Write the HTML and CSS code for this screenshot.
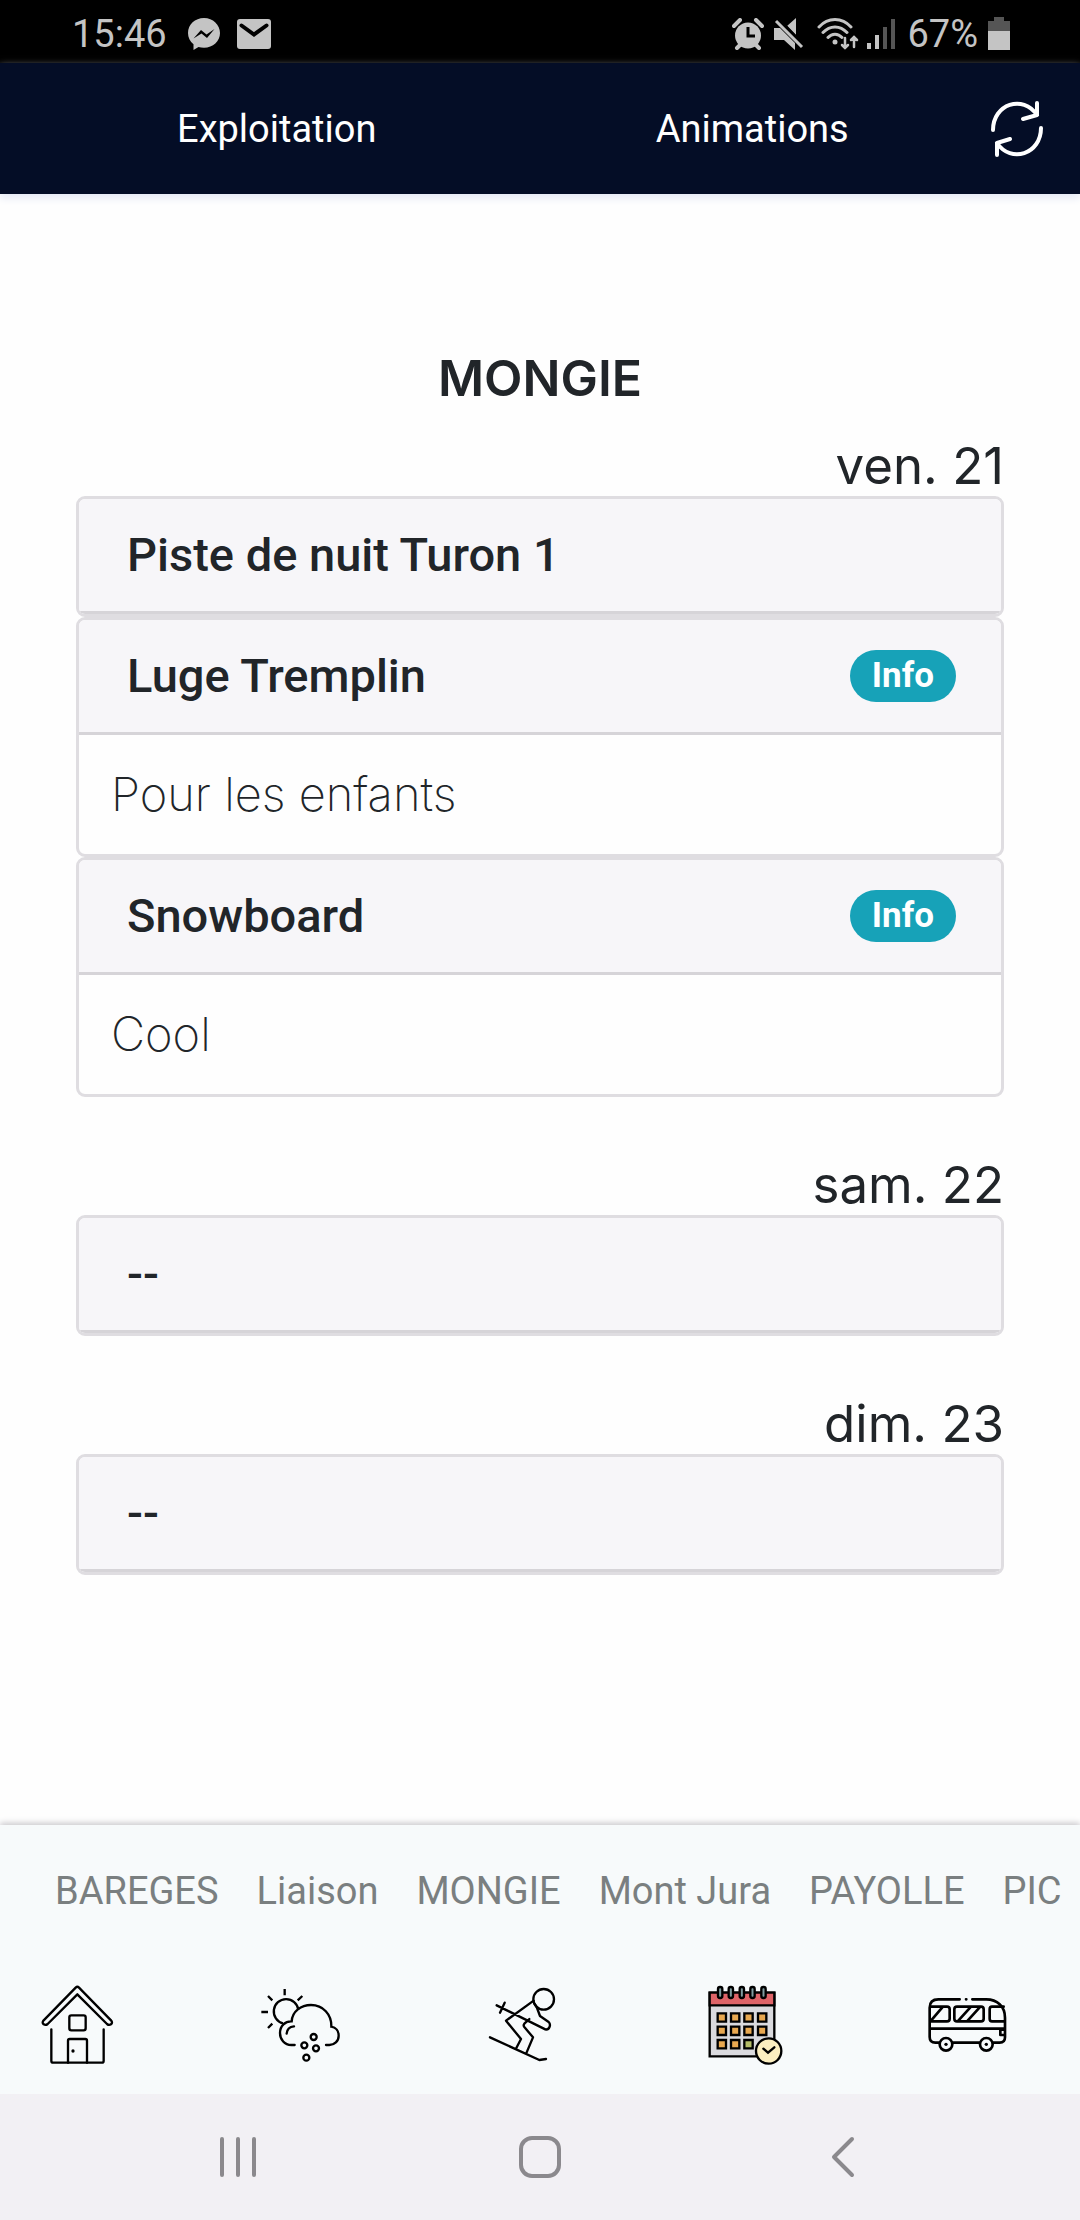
FILE: index.html
```html
<!DOCTYPE html>
<html lang="fr">
<head>
<meta charset="utf-8">
<meta name="viewport" content="width=device-width, initial-scale=1">
<title>Animations</title>
<link rel="stylesheet" href="styles.css">
</head>
<body>
<div class="status">
  <div class="status-group">
    <span class="clock">15:46</span>
    <svg class="messenger" width="32" height="32" viewBox="0 0 32 32"><path fill="#c4c4c4" d="M16 0C7 0 0 6.500 0 15c0 4.700 2 8.500 5.500 11.200V32l5-3c1.700.5 3.500.7 5.500.7 9 0 16-6.500 16-14.700S25 0 16 0z"/><path fill="#000" d="M5.500 20.500 13 12l5.500 4.500L26.500 11 19 20l-5.500-4.500z"/></svg>
    <svg width="34" height="30" viewBox="0 0 34 30"><rect width="34" height="30" rx="3" fill="#c4c4c4"/><path d="m4.500 6.500 12.500 9 12.500-9" fill="none" stroke="#000" stroke-width="4" stroke-linecap="round"/></svg>
  </div>
  <div class="status-group status-right">
    <svg width="32" height="32" viewBox="0 0 32 32"><g fill="none" stroke="#c4c4c4" stroke-width="4"><path d="m2 8 6-6M30 8l-6-6M5 30l4-4M27 30l-4-4" stroke-linecap="round"/></g><circle cx="16" cy="17.500" r="13" fill="#c4c4c4"/><path d="M16 9v9h7" fill="none" stroke="#000" stroke-width="3"/></svg>
    <svg width="30" height="32" viewBox="0 0 30 32"><path fill="#c4c4c4" d="M13 8l9-8v17zM0 10h6l15 15v7L10 22H0z"/><path d="m4 1 25 26" stroke="#000" stroke-width="4"/><path d="m2 3 26 26" stroke="#c4c4c4" stroke-width="3"/></svg>
    <svg class="wifi" width="42" height="34" viewBox="0 0 42 34"><g fill="none" stroke="#c4c4c4" stroke-width="3" stroke-linecap="round"><path d="M2 10c9-10 23-10 32 0M6 15.500c7-7.500 17-7.500 24 0M11 20.500c4-4.500 10-4.500 14 0"/><path stroke-width="2.500" d="M28 21v10m-3-3 3 3 3-3M37 30V20m-3 3 3-3 3 3"/></g><circle cx="18" cy="25" r="2.500" fill="#c4c4c4"/></svg>
    <svg class="signal" width="28" height="30" viewBox="0 0 28 30"><path fill="#c4c4c4" d="M0 24h4v6H0zM8 16h4v14H8z"/><path fill="#555" d="M16 8h4v22h-4zM24 0h4v30h-4z"/></svg>
    <span class="clock">67%</span>
    <svg width="22" height="33" viewBox="0 0 22 33"><path fill="#555" d="M6 0h10v4h6v10H0V4h6z"/><path fill="#c4c4c4" d="M0 14h22v19H0z"/></svg>
  </div>
</div>

<header class="topbar">
  <nav class="tabs">
    <a href="#exploitation">Exploitation</a>
    <a href="#animations">Animations</a>
  </nav>
  <button class="refresh" type="button" aria-label="Actualiser">
    <svg width="54" height="58" viewBox="0 0 54 58"><g fill="none" stroke="#fff" stroke-width="4" stroke-linecap="round" stroke-linejoin="round"><path d="M3 30C3 4 33-6 47 15M33 19l14-4V3M51 28c0 26-30 36-44 15M20 39 7 43v12"/></g></svg>
  </button>
</header>

<main class="content">
  <h1 class="resort">MONGIE</h1>

  <section class="day">
    <h2 class="date">ven. 21</h2>
    <article class="card">
      <h3 class="card-head">Piste de nuit Turon 1</h3>
    </article>
    <article class="card">
      <h3 class="card-head">Luge Tremplin <span class="badge">Info</span></h3>
      <p class="card-body">Pour les enfants</p>
    </article>
    <article class="card">
      <h3 class="card-head">Snowboard <span class="badge">Info</span></h3>
      <p class="card-body">Cool</p>
    </article>
  </section>

  <section class="day">
    <h2 class="date">sam. 22</h2>
    <article class="card">
      <h3 class="card-head">--</h3>
    </article>
  </section>

  <section class="day">
    <h2 class="date">dim. 23</h2>
    <article class="card">
      <h3 class="card-head">--</h3>
    </article>
  </section>
</main>

<footer class="toolbar">
  <nav class="resorts">
    <a href="#bareges">BAREGES</a>
    <a href="#liaison">Liaison</a>
    <a href="#mongie">MONGIE</a>
    <a href="#montjura">Mont Jura</a>
    <a href="#payolle">PAYOLLE</a>
    <a href="#pic">PIC</a>
  </nav>
  <nav class="icons">
    <a href="#accueil" aria-label="Accueil">
      <svg viewBox="21 45 240 240"><g fill="none" stroke="#000" stroke-width="7" stroke-linecap="round" stroke-linejoin="round"><path d="M137 53q5-5 10 0l96 98q6 7 0 12-6 4-12-1L142 73 53 162q-6 5-12 1-6-5 0-12z"/><path d="M64 178v94q0 6 6 6h145q6 0 6-6v-94"/><rect x="118" y="136" width="49" height="45" rx="6"/><path d="M114 278v-66q0-5 5-5h47q5 0 5 5v66"/></g><circle cx="129" cy="243" r="5"/></svg>
    </a>
    <a href="#meteo" aria-label="Météo">
      <svg viewBox="688 45 240 240"><g fill="none" stroke="#000" stroke-width="7" stroke-linecap="butt"><path d="M762 57v19M712 78l13 13M815 78l-14 13M692 126h20M712 174l13-13"/><path d="M803 119a37 37 0 1 0-46 41"/><path stroke-linecap="round" d="M792 225h-10c-20 0-34-16-34-36 0-22 16-36 35-35 2-30 28-49 58-49 36 0 62 28 61 65 14 2 22 13 22 27 0 17-13 28-28 28h-10M768 191c1-13 9-21 22-22"/><circle cx="849" cy="201" r="9"/><circle cx="821" cy="226" r="9"/><circle cx="856" cy="235" r="9"/><circle cx="827" cy="263" r="9"/></g></svg>
    </a>
    <a href="#pistes" aria-label="Pistes">
      <svg viewBox="6 45 240 240"><g fill="none" stroke="#000" stroke-width="7" stroke-linecap="round" stroke-linejoin="round"><circle cx="191" cy="88" r="31"/><path d="M161 92 78 152l45 55-14 27M50 106l146 72c12 3 18-14 10-22l-26-18-10-27-7-11M74 98l-14 30M148 147l-15 14q-4 5 0 10l26 31-19 45M30 202l148 68 20-3"/></g></svg>
    </a>
    <a href="#agenda" aria-label="Animations">
      <svg viewBox="43 45 240 240"><g stroke="#000" stroke-width="7"><path fill="#dadade" d="M57 68h194v191H57z"/><path fill="#df6468" d="M57 68h194v38H57z"/><g fill="#7f9da0"><rect x="82" y="51" width="13" height="33" rx="6"/><rect x="114" y="51" width="13" height="33" rx="6"/><rect x="147" y="51" width="13" height="33" rx="6"/><rect x="179" y="51" width="13" height="33" rx="6"/><rect x="212" y="51" width="13" height="33" rx="6"/></g><g fill="#e8a850"><path d="M81 130h25v25H81zM121 130h25v25h-25zM161 130h25v25h-25zM202 130h25v25h-25zM81 170h25v25H81zM121 170h25v25h-25zM161 170h25v25h-25zM202 170h25v25h-25zM81 210h25v25H81zM121 210h25v25h-25z"/><path fill="#b5bd68" d="M161 210h25v25h-25z"/></g><circle cx="234" cy="243" r="38" fill="#fbeec0"/><path fill="none" stroke-linecap="round" d="m218 236 14 12 19-16"/></g></svg>
    </a>
    <a href="#navettes" aria-label="Navettes">
      <svg viewBox="0 0 240 240"><g fill="none" stroke="#000" stroke-width="8" stroke-linecap="round" stroke-linejoin="round"><path d="M98 43H34Q8 43 8 68v88q0 17 17 17h13M77 173h80M198 173h20q16 0 16-16V98c0-34-24-55-56-55h-42M117 43h1M10 131h224M10 65h50q8 0 8 8v28q0 8-8 8H10"/><rect x="82" y="65" width="88" height="44" rx="8"/><path d="M230 65h-35q-7 0-7 8v28q0 8 7 8h37M12 107l34-40M94 107l36-40M122 107l36-40M232 134h-12v16h12"/><circle cx="57" cy="178" r="19"/><circle cx="178" cy="178" r="19"/></g><circle cx="57" cy="178" r="5"/><circle cx="178" cy="178" r="5"/></svg>
    </a>
  </nav>
</footer>

<div class="system">
  <button type="button" aria-label="Applications récentes"><svg width="44" height="44" viewBox="0 0 44 44"><path d="M6 4v36M22 4v36M38 4v36" stroke="#8b898d" stroke-width="4" stroke-linecap="round"/></svg></button>
  <button type="button" aria-label="Écran principal"><svg width="44" height="44" viewBox="0 0 44 44"><rect x="3" y="3" width="38" height="38" rx="11" fill="none" stroke="#8b898d" stroke-width="4"/></svg></button>
  <button type="button" aria-label="Retour"><svg width="44" height="44" viewBox="0 0 44 44"><path d="M32 4 14 22l18 18" fill="none" stroke="#8b898d" stroke-width="4" stroke-linecap="round" stroke-linejoin="round"/></svg></button>
</div>
</body>
</html>
```
FILE: styles.css
```css
* { box-sizing: border-box; }

body {
  margin: 0;
  min-height: 100vh;
  display: flex;
  flex-direction: column;
  background: #fefefe;
  color: #212529;
  font-family: Roboto, "Liberation Sans", sans-serif;
}

h1, h2, h3, p { margin: 0; font-weight: 400; }
a { color: inherit; text-decoration: none; }
button { border: 0; padding: 0; background: none; display: flex; }
svg { display: block; flex: none; }

.status {
  height: 63px;
  padding: 4px 70px 0 72px;
  display: flex;
  align-items: center;
  justify-content: space-between;
  background: #000;
  color: #c4c4c4;
}
.status-group { display: flex; align-items: center; gap: 17px; }
.status-right { gap: 10px; }
.clock { font-size: 38px; line-height: 44px; }
.messenger { margin-left: 4px; }
.wifi { margin-left: 3px; }
.signal { margin: 0 2px 0 -2px; }

.topbar {
  height: 131px;
  padding: 0 36px 0 39px;
  display: flex;
  align-items: center;
  background: #040d26;
  color: #fff;
  box-shadow: 0 4px 8px #e4e8f4;
}
.tabs { flex: 1; display: flex; }
.tabs a { flex: 1; text-align: center; font-size: 38px; line-height: 44px; }

.content { flex: 1; padding: 148px 76px 0; }
.resort {
  font: 600 50px/72px Inter, sans-serif;
  text-align: center;
}
.day { padding: 22px 0 36px; }
.date {
  font: 400 51px/60px Inter, sans-serif;
  text-align: right;
}
.card {
  border: 3px solid #dfdde1;
  border-radius: 9px;
  background: #fefefe;
  overflow: hidden;
}
.card-head {
  height: 115px;
  padding: 0 45px 0 48px;
  display: flex;
  align-items: center;
  justify-content: space-between;
  border-bottom: 3px solid #d6d4d8;
  background: #f7f6f9;
  font-size: 47px;
  line-height: 56px;
  font-weight: 500;
}
.badge {
  padding: 4px 22px;
  border-radius: 26px;
  background: #17a2b8;
  color: #fff;
  font-size: 35px;
  line-height: 44px;
  font-weight: 700;
}
.card-body {
  height: 119px;
  padding: 30px 32px;
  font: 200 47px/58px Inter, sans-serif;
}

.toolbar {
  height: 269px;
  padding: 44px 0 29px;
  display: flex;
  flex-direction: column;
  justify-content: space-between;
  background: #f7fafb;
  box-shadow: 0 -2px 6px #c9c7cb;
}
.resorts {
  padding-left: 55px;
  display: flex;
  gap: 38px;
  overflow: hidden;
  white-space: nowrap;
  color: #7a7f80;
  font-size: 38px;
  line-height: 44px;
}
.icons {
  padding: 0 73px 0 37px;
  display: flex;
  justify-content: space-between;
}
.icons svg { width: 80px; height: 80px; }

.system {
  height: 126px;
  padding: 0 8%;
  display: flex;
  align-items: center;
  background: #f2f0f4;
}
.system button { flex: 1; justify-content: center; }
```
